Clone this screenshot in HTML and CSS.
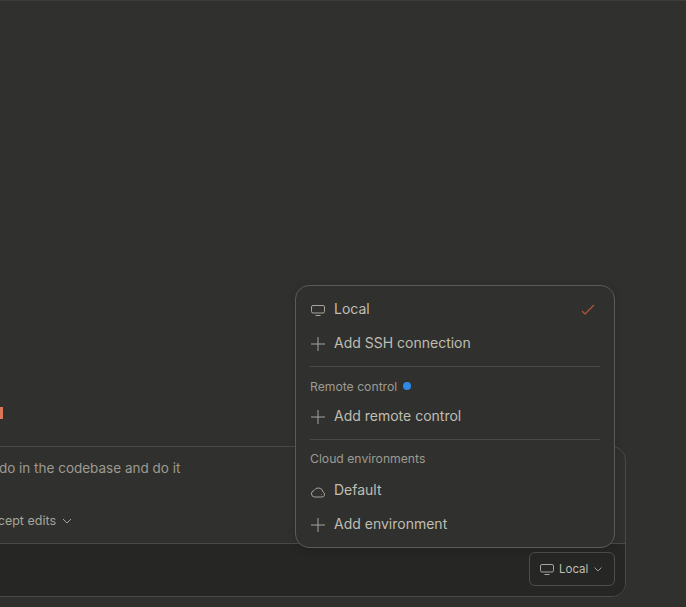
FILE: index.html
```html
<!DOCTYPE html>
<html lang="en">
<head>
<meta charset="utf-8">
<title>Environment menu</title>
<link rel="stylesheet" href="styles.css">
</head>
<body>
<div class="app">
  <div class="spark"></div>
  <div class="composer">
    <div class="input">
      <div class="prompt">Find a small todo in the codebase and do it</div>
      <div class="mode">Accept edits
        <svg class="chev" viewBox="0 0 10 10"><path d="M1 3l4 4 4-4"/></svg>
      </div>
    </div>
    <div class="footer">
      <button class="env-btn">
        <svg class="ico" viewBox="0 0 14 14"><path d="M2 2.500h10a1.500 1.500 0 0 1 1.500 1.500v4.500a1.500 1.500 0 0 1-1.500 1.500H2a1.500 1.500 0 0 1-1.500-1.500V4a1.500 1.500 0 0 1 1.500-1.500zM4.500 12.500h5"/></svg>
        <span>Local</span>
        <svg class="chev chev-sm" viewBox="0 0 10 10"><path d="M1.500 3.500l3.500 3.500 3.500-3.500"/></svg>
      </button>
    </div>
  </div>
  <div class="menu">
    <div class="item">
      <svg class="ico" viewBox="0 0 14 14"><path d="M2 2.500h10a1.500 1.500 0 0 1 1.500 1.500v4.500a1.500 1.500 0 0 1-1.500 1.500H2a1.500 1.500 0 0 1-1.500-1.500V4a1.500 1.500 0 0 1 1.500-1.500zM4.500 12.500h5"/></svg>
      <span class="label">Local</span>
      <svg class="check" viewBox="0 0 14 14"><path d="M1 9l3 3 9-9"/></svg>
    </div>
    <div class="item">
      <svg class="ico" viewBox="0 0 14 14"><path d="M7 0v14M0 7h14"/></svg>
      <span class="label">Add SSH connection</span>
    </div>
    <div class="rule"></div>
    <div class="heading">Remote control <i class="dot"></i></div>
    <div class="item">
      <svg class="ico" viewBox="0 0 14 14"><path d="M7 0v14M0 7h14"/></svg>
      <span class="label">Add remote control</span>
    </div>
    <div class="rule"></div>
    <div class="heading heading-tall">Cloud environments</div>
    <div class="item">
      <svg class="ico" viewBox="0 0 14 14"><path d="M3.600 13H11a2.600 2.600 0 0 0 1-5A4.800 4.800 0 0 0 3 6.500 3.300 3.300 0 0 0 3.600 13zM10.500 10.500v.5"/></svg>
      <span class="label">Default</span>
    </div>
    <div class="item">
      <svg class="ico" viewBox="0 0 14 14"><path d="M7 0v14M0 7h14"/></svg>
      <span class="label">Add environment</span>
    </div>
  </div>
</div>
</body>
</html>
```
FILE: styles.css
```css
* { box-sizing: border-box; }
html, body { margin: 0; height: 100%; overflow: hidden; background: #30302e; }
body { font-family: Inter, "Liberation Sans", sans-serif; color: #bfbeb3; }
.app {
  position: relative;
  height: 607px;
  width: 686px;
  overflow: hidden;
  border-top: 1px solid #3c3c3a;
  display: flex;
  flex-direction: column;
  justify-content: flex-end;
  padding: 0 60px 10px 0;
}
.spark { width: 3px; height: 12px; background: #d97757; margin-bottom: 27px; }
.composer {
  margin-left: -120px;
  border: 1px solid #4a4a47;
  border-radius: 14px;
  overflow: hidden;
  background: #30302e;
}
.input { height: 97px; padding: 11px 0 0 26px; border-bottom: 1px solid #4a4a47; }
.prompt { font-size: 13.5px; line-height: 20px; color: #9c9b92; white-space: nowrap; }
.mode {
  margin: 34px 0 0 75px; font-size: 12.5px; line-height: 18px; color: #a6a59b; white-space: nowrap;
  display: flex; align-items: center; gap: 6px;
}
.chev { width: 10px; height: 10px; fill: none; stroke: #a6a59b; stroke-width: 1; flex: none; }
.chev-sm { stroke: #9c9b92; }
.footer { height: 52px; background: #262624; display: flex; justify-content: flex-end; align-items: center; padding: 0 10px 2px 0; }
.env-btn {
  width: 86px; height: 34px; border: 1px solid #4e4e4b; border-radius: 6px; background: transparent; color: #bfbeb3;
  font: 11.5px/16px Inter, "Liberation Sans", sans-serif; display: flex; align-items: center; gap: 5px; padding: 0 10px;
}
.ico { width: 14px; height: 14px; fill: none; stroke: #a6a59b; stroke-width: 1; flex: none; }
.menu {
  position: absolute; left: 295px; top: 284px; width: 320px; height: 263px;
  background: #30302e; border: 1px solid #5b5b58; border-radius: 14px;
  padding: 6px 14px 5px; box-shadow: 0 2px 8px rgba(0,0,0,.15);
}
.item { height: 34px; display: flex; align-items: center; gap: 9px; padding-left: 1px; font-size: 14px; color: #bfbeb3; }
.item .ico { margin-top: 2px; }
.label { flex: 1; margin-bottom: 2px; }
.check { width: 14px; height: 14px; fill: none; stroke: #b8593c; stroke-width: 1.100; flex: none; margin-right: 5px; }
.rule { height: 1px; background: #4a4a47; margin-top: 6px; }
.heading { height: 32px; font-size: 12.2px; color: #9c9b92; display: flex; align-items: center; gap: 6px; padding-top: 6px; }
.heading-tall { height: 33px; padding-top: 4px; }
.dot { width: 8px; height: 8px; border-radius: 50%; background: #2e8ae6; }
```
